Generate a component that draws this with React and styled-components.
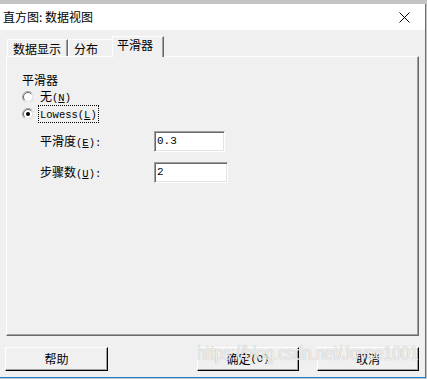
import React from 'react'
import styled, { createGlobalStyle } from 'styled-components'

const Global = createGlobalStyle`
  html, body {
    margin: 0;
    padding: 0;
  }
  body {
    background: #bdbdbd;
    font-family: "Noto Sans CJK SC", "Liberation Sans", sans-serif;
    color: #000;
  }
`

const Screen = styled.div`
  width: 427px;
  height: 379px;
  padding-top: 4px;
  box-sizing: border-box;
  overflow: hidden;
  background: #c4c4c4;
`

const Window = styled.div`
  position: relative;
  width: 426px;
  height: 374px;
  box-sizing: border-box;
  border-right: 1px solid #1883d7;
  border-bottom: 1px solid #1883d7;
  background: #f0f0f0;
  display: flex;
  flex-direction: column;
`

const TitleBar = styled.div`
  height: 26px;
  flex: none;
  background: #fff;
  display: flex;
  align-items: center;
  justify-content: space-between;
  padding: 0 15px 0 3px;
  font-size: 12px;
  line-height: 14px;
`

const Body = styled.div`
  flex: 1;
  display: flex;
  flex-direction: column;
  padding: 6px 6px 6px 6px;
`

const TabRow = styled.div`
  height: 20px;
  display: flex;
  align-items: flex-end;
  padding-left: 1px;
  position: relative;
  z-index: 1;
`

const Tab = styled.div`
  box-sizing: border-box;
  width: ${p => p.$w}px;
  height: ${p => (p.$active ? 21 : 17)}px;
  margin: ${p => (p.$active ? '0 -2px -1px -2px' : '0')};
  padding: ${p => (p.$active ? '1px 0 0 4px' : '2px 0 0 5px')};
  background: #f0f0f0;
  border-top: 1px solid #fff;
  border-left: 1px solid #fff;
  border-right: 1px solid #696969;
  box-shadow: inset -1px 0 #a0a0a0;
  font-size: 12px;
  line-height: 14px;
  white-space: nowrap;
`

const Panel = styled.div`
  box-sizing: border-box;
  height: 280px;
  border-top: 1px solid #fff;
  border-left: 1px solid #fff;
  border-right: 1px solid #696969;
  border-bottom: 1px solid #696969;
  box-shadow: inset -1px -1px #a0a0a0;
  padding: 15px 15px;
  font-size: 12px;
`

const GroupLabel = styled.div`
  height: 16px;
  line-height: 16px;
`

const RadioRow = styled.div`
  height: 17px;
  display: flex;
  align-items: center;
  gap: 5px;
`

const RadioText = styled.span`
  line-height: 14px;
  padding: 0 1px;
  margin-left: -1px;
  border: 1px dotted ${p => (p.$focus ? '#000' : 'transparent')};
`

const Latin = styled.span`
  font-family: "Liberation Mono", monospace;
  font-size: 10.5px;
`

const Fields = styled.div`
  margin-top: 9px;
  padding-left: 18px;
  display: flex;
  flex-direction: column;
  gap: 10px;
`

const FieldRow = styled.div`
  display: flex;
  align-items: center;
  height: 21px;
`

const FieldLabel = styled.span`
  width: 114px;
  line-height: 14px;
`

const Input = styled.div`
  box-sizing: border-box;
  width: ${p => p.$w}px;
  height: 21px;
  background: #fff;
  border-top: 1px solid #a0a0a0;
  border-left: 1px solid #a0a0a0;
  border-right: 1px solid #fff;
  border-bottom: 1px solid #fff;
  box-shadow: inset 1px 1px #696969, inset -1px -1px #e3e3e3;
  padding: 0 0 0 2px;
  font-family: "Liberation Mono", monospace;
  font-size: 11px;
  line-height: 19px;
`

const ButtonRow = styled.div`
  margin-top: 11px;
  display: flex;
  align-items: center;
`

const Button = styled.div`
  box-sizing: border-box;
  width: ${p => p.$w || 102}px;
  height: 24px;
  margin-left: ${p => p.$ml || '0'};
  background: #f0f0f0;
  border-top: 1px solid #fff;
  border-left: 1px solid #fff;
  border-right: 1px solid #000;
  border-bottom: 1px solid #000;
  box-shadow: inset -1px -1px #a0a0a0;
  display: flex;
  align-items: center;
  justify-content: center;
  font-size: 12px;
  line-height: 14px;
`

const Watermark = styled.div`
  position: absolute;
  left: 197px;
  top: 338px;
  font-family: "Liberation Sans", Arial, sans-serif;
  font-size: 21px;
  line-height: 21px;
  white-space: nowrap;
  color: rgba(255, 255, 255, 0.8);
  text-shadow: 0 0 1px rgba(110, 110, 110, 0.6);
  transform: scaleX(0.75);
  transform-origin: left top;
  pointer-events: none;
`

const CloseIcon = () => (
  <svg width="11" height="11" viewBox="0 0 11 11">
    <path d="M0.5 0.5 L10.5 10.5 M10.5 0.5 L0.5 10.5" stroke="#000" strokeWidth="1" />
  </svg>
)

const Radio = ({ checked }) => (
  <svg width="12" height="12" viewBox="0 0 12 12">
    <circle cx="6" cy="6" r="5.5" fill="#fff" stroke="#a0a0a0" />
    <path d="M9.9 2.1 A5.5 5.5 0 0 1 2.1 9.9" fill="none" stroke="#fff" />
    <path d="M2.8 9.2 A4.5 4.5 0 0 1 9.2 2.8" fill="none" stroke="#696969" />
    <path d="M9.2 2.8 A4.5 4.5 0 0 1 2.8 9.2" fill="none" stroke="#e3e3e3" />
    {checked && <circle cx="6" cy="6" r="2" fill="#000" />}
  </svg>
)

export default function App() {
  return (
    <>
      <Global />
      <Screen>
        <Window>
          <TitleBar>
            <span>直方图: 数据视图</span>
            <CloseIcon />
          </TitleBar>
          <Body>
            <TabRow>
              <Tab $w={61}>数据显示</Tab>
              <Tab $w={46}>分布</Tab>
              <Tab $w={52} $active>平滑器</Tab>
            </TabRow>
            <Panel>
              <GroupLabel>平滑器</GroupLabel>
              <RadioRow>
                <Radio />
                <RadioText>无<Latin>(<u>N</u>)</Latin></RadioText>
              </RadioRow>
              <RadioRow>
                <Radio checked />
                <RadioText $focus><Latin>Lowess(<u>L</u>)</Latin></RadioText>
              </RadioRow>
              <Fields>
                <FieldRow>
                  <FieldLabel>平滑度<Latin>(<u>E</u>):</Latin></FieldLabel>
                  <Input $w={71}>0.3</Input>
                </FieldRow>
                <FieldRow>
                  <FieldLabel>步骤数<Latin>(<u>U</u>):</Latin></FieldLabel>
                  <Input $w={74}>2</Input>
                </FieldRow>
              </Fields>
            </Panel>
            <ButtonRow>
              <Button $w={103} $ml="-1px">帮助</Button>
              <Button $ml="auto">确定<Latin>(O)</Latin></Button>
              <Button $ml="18px">取消</Button>
            </ButtonRow>
          </Body>
          <Watermark>https://blog.csdn.net/Joyce1001</Watermark>
        </Window>
      </Screen>
    </>
  )
}
